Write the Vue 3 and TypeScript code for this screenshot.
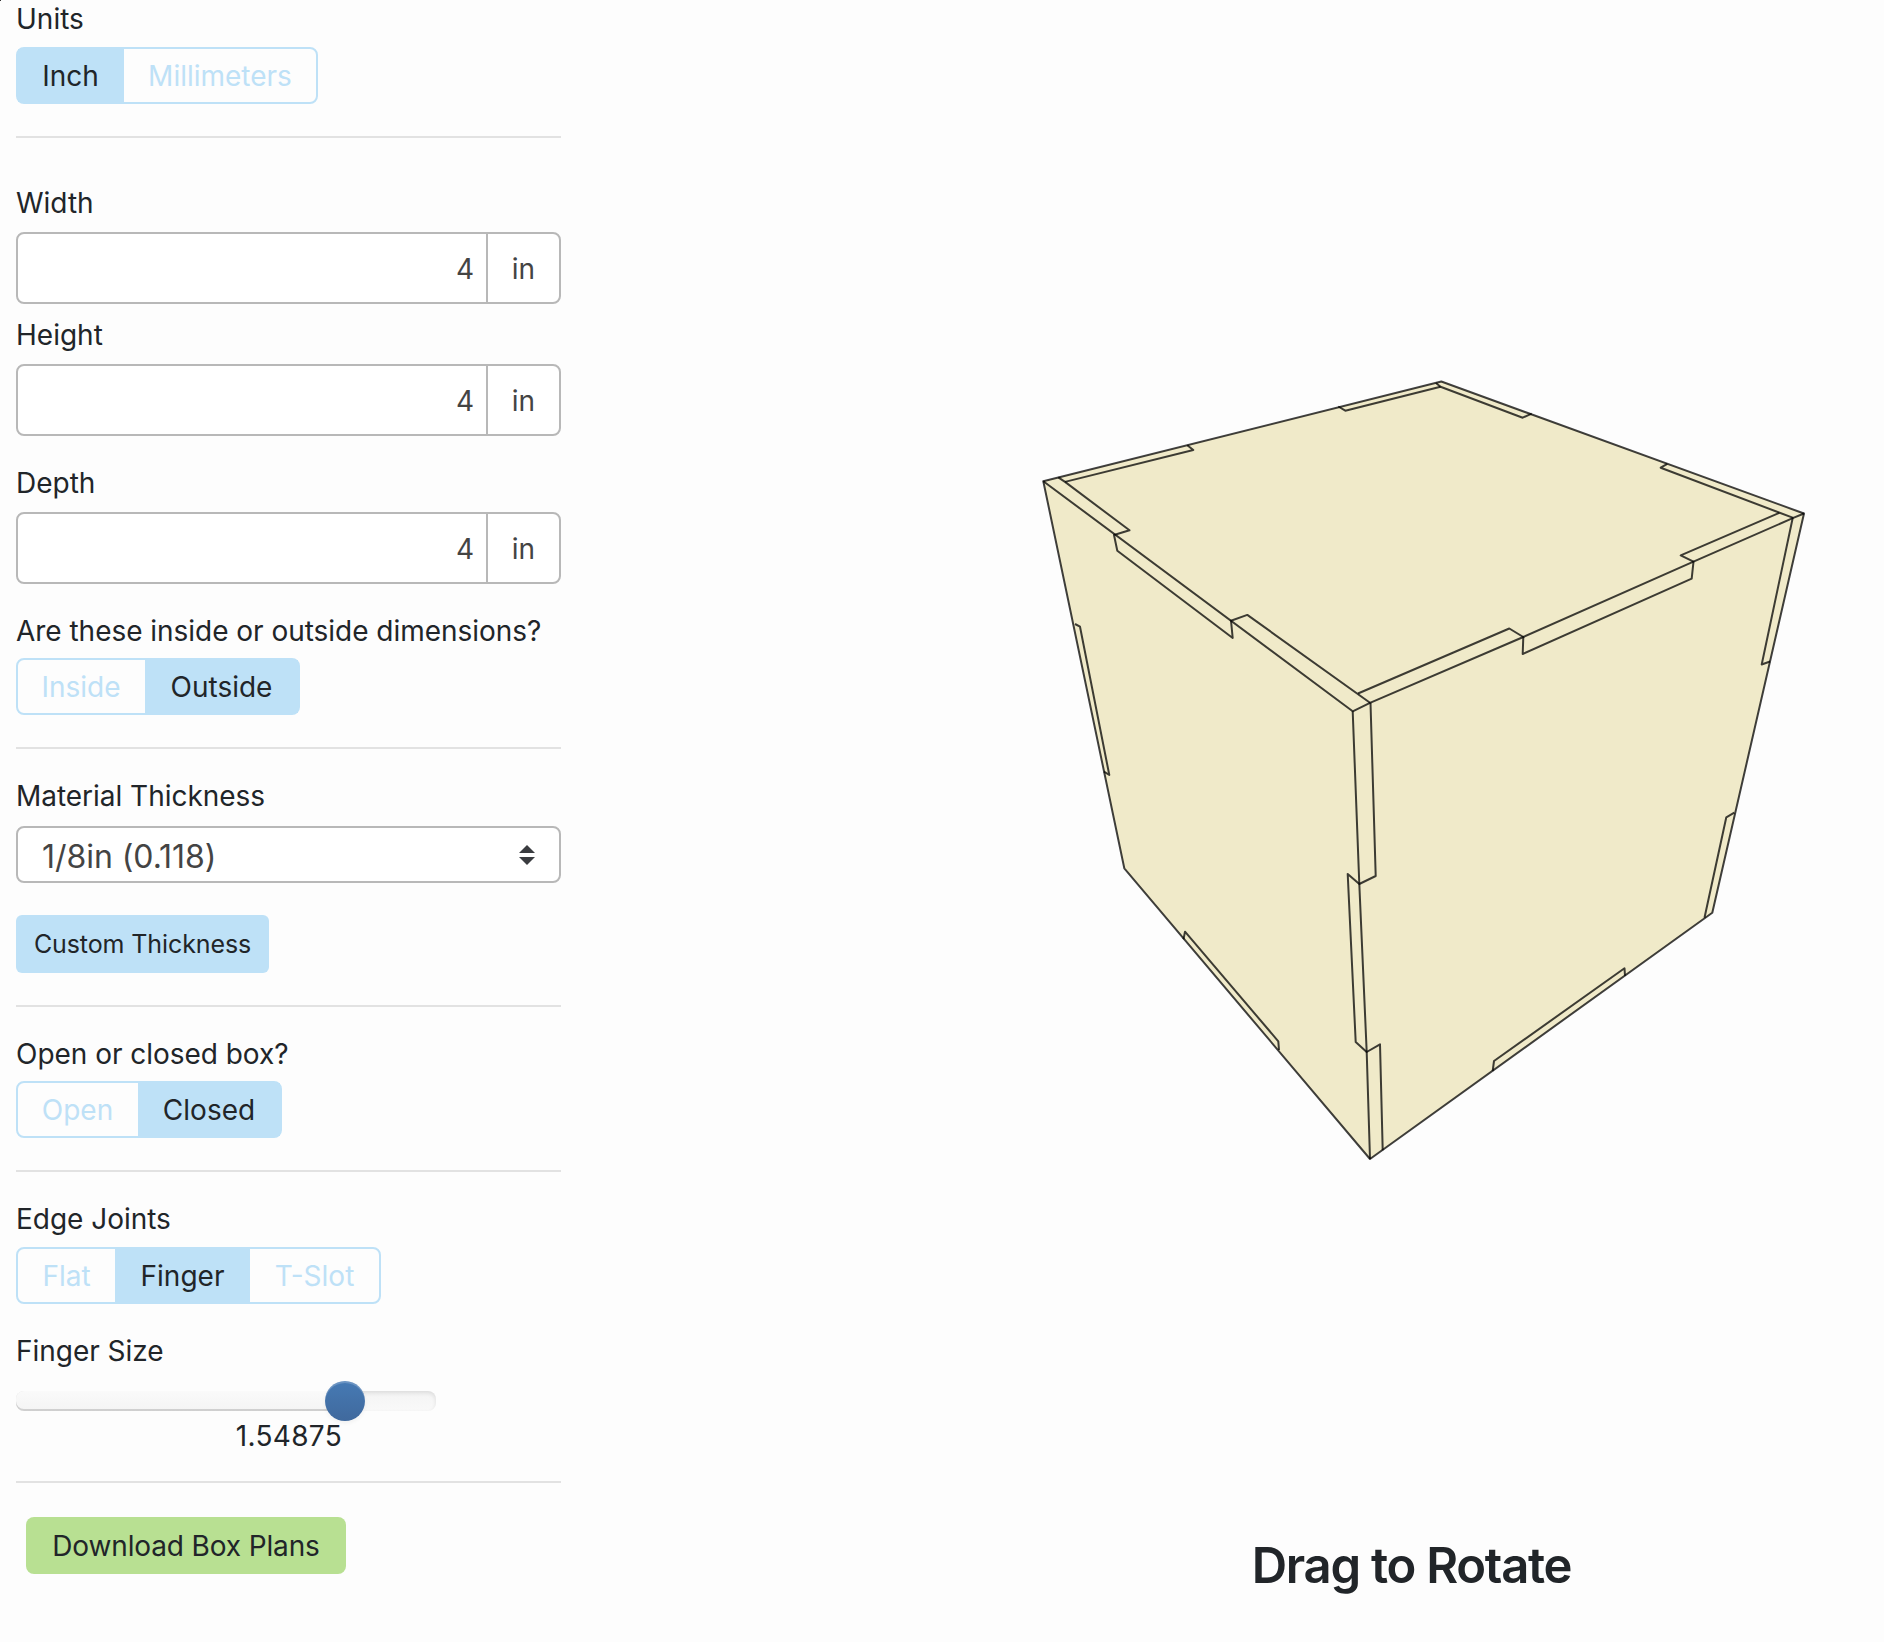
<script setup lang="ts">
import { ref } from 'vue'

interface Dimension {
  name: string
  value: number
}

const dimensions = ref<Dimension[]>([
  { name: 'Width', value: 4 },
  { name: 'Height', value: 4 },
  { name: 'Depth', value: 4 },
])

const units = ref('Inch')
const side = ref('Outside')
const lid = ref('Closed')
const joint = ref('Finger')
const fingerSize = ref(1.54875)
const handlePercent = 78.3

const outline = '1043.3,481.2 1441.3,381.5 1804,513.5 1712.3,912.7 1370,1159 1124.3,868.3'

// Visible panel seams, finger by finger
const seams: string[] = [
  // front top edges
  '1043.3,481.2 1352.7,711.3 1370,702.8 1523.3,637 1693.5,561.7 1793.3,517.9 1804,513.5',
  '1058.3,477.4 1065,481.9 1129.5,530.3 1114,535 1117.3,550.7 1232.7,638 1231,620.7 1247.3,614.9 1370,702.8',
  '1358,693.5 1509.3,628.5 1523.3,637 1522.7,654 1691.7,578.7 1693.5,561.7 1680.7,555.4 1779.3,512.8',
  // back top edges
  '1065,481.9 1193.3,450 1187.3,445.3',
  '1338.3,406.5 1345.3,410.7 1440.5,386.7',
  '1436,382.9 1440.5,386.7 1522.7,417.7 1531.7,413.6',
  '1793.3,517.9 1660.7,467.7 1667.3,463.8',
  // near corner
  '1352.7,711.3 1359.3,884 1366.7,1052 1370,1159',
  '1370.5,702.8 1375.7,876 1359.3,884 1347.7,874 1355.7,1042 1366.7,1052 1380,1044.3 1382.7,1150.2',
  // right corner
  '1792.7,518 1761.7,664.5 1770,661.5',
  '1734.3,812.7 1726.3,817.3 1704.5,917.8',
  // left corner and bottom edges
  '1075,624 1080,626.7 1109.3,775 1104,771.7',
  '1183.5,939.3 1185,931.7 1278.3,1041.3 1279,1050',
  '1492.7,1071 1494,1061 1624.5,968.3 1625,975.7',
]
</script>

<template>
  <main class="app">
    <form class="controls" @submit.prevent>
      <label class="label first">Units</label>
      <div class="group g10">
        <button v-for="(u, i) in ['Inch', 'Millimeters']" :key="u" type="button" class="seg" :class="[{ on: units === u }, ['w108', 'w194'][i]]" @click="units = u">{{ u }}</button>
      </div>
      <hr>

      <div v-for="d in dimensions" :key="d.name" class="dimension">
        <label class="label">{{ d.name }}</label>
        <div class="input-row">
          <span class="amount">{{ d.value }}</span>
          <span class="suffix">in</span>
        </div>
      </div>

      <label class="label l29 question">Are these inside or outside dimensions?</label>
      <div class="group">
        <button v-for="(s, i) in ['Inside', 'Outside']" :key="s" type="button" class="seg" :class="[{ on: side === s }, ['w129', 'w155'][i]]" @click="side = s">{{ s }}</button>
      </div>
      <hr>

      <label class="label l29">Material Thickness</label>
      <div class="select">
        <span class="choice">1/8in (0.118)</span>
        <svg class="arrows" width="16" height="20" viewBox="0 0 16 20"><path d="M0 8 8 0l8 8zM0 12h16l-8 8z" fill="#3a3c40" /></svg>
      </div>
      <button type="button" class="custom">Custom Thickness</button>
      <hr>

      <label class="label l29">Open or closed box?</label>
      <div class="group">
        <button v-for="(o, i) in ['Open', 'Closed']" :key="o" type="button" class="seg" :class="[{ on: lid === o }, ['w122', 'w144'][i]]" @click="lid = o">{{ o }}</button>
      </div>
      <hr>

      <label class="label l29">Edge Joints</label>
      <div class="group g10">
        <button v-for="(j, i) in ['Flat', 'Finger', 'T-Slot']" :key="j" type="button" class="seg" :class="[{ on: joint === j }, ['w99', 'w135', 'w131'][i]]" @click="joint = j">{{ j }}</button>
      </div>
      <label class="label l29">Finger Size</label>
      <div class="slider">
        <div class="fill" :style="{ width: handlePercent + '%' }"></div>
        <div class="handle" :style="{ left: handlePercent + '%' }"></div>
      </div>
      <output class="label size">{{ fingerSize }}</output>
      <hr class="last">

      <button type="button" class="download">Download Box Plans</button>
    </form>

    <section class="preview">
      <svg class="box" width="790" height="800" viewBox="1030 370 790 800">
        <polygon :points="outline" fill="#f0eac9" />
        <g fill="none" stroke="#000" stroke-opacity=".75" stroke-width="2" stroke-linejoin="round">
          <polygon :points="outline" />
          <polyline v-for="s in seams" :key="s" :points="s" />
        </g>
      </svg>
      <h3 class="hint">Drag to Rotate</h3>
    </section>
    <span class="speck"></span>
  </main>
</template>

<style>
body {
  background: #fdfdfd;
}
</style>

<style scoped>
.app {
  position: relative;
  display: flex;
  box-sizing: border-box;
  width: 1884px;
  height: 1642px;
  overflow: hidden;
  background: #fdfdfd;
  color: #212529;
  font: 400 28px/36px Inter, "Liberation Sans", sans-serif;
}
.speck {
  position: absolute;
  top: 0;
  left: 0;
  width: 1px;
  height: 1px;
  background: #333;
}
.controls {
  flex: none;
  display: flex;
  flex-direction: column;
  align-items: stretch;
  width: 545px;
  margin-left: 16px;
}
button {
  box-sizing: border-box;
  margin: 0;
  padding: 0;
  border: 0;
  color: #212529;
  font: inherit;
  letter-spacing: inherit;
  white-space: nowrap;
}
.label {
  display: block;
  height: 36px;
  white-space: nowrap;
}
.first {
  margin-top: 1px;
}
.l29 {
  margin-top: 29px;
  letter-spacing: -.03px;
}
hr {
  width: 100%;
  height: 2px;
  margin: 32px 0 0;
  border: 0;
  background: #e2e2e2;
}
hr.last {
  margin-top: 27px;
}
.group {
  display: flex;
  align-self: flex-start;
  box-sizing: border-box;
  height: 57px;
  margin-top: 9px;
  border: 2px solid #bee1f7;
  border-radius: 8px;
}
.g10 {
  margin-top: 10px;
}
.seg {
  height: 53px;
  background: transparent;
  color: #bee1f7;
}
.seg.on {
  background: #bee1f7;
  color: #212529;
}
.w108 { width: 106px; }
.w194 { width: 192px; }
.w129 { width: 127px; }
.w155 { width: 153px; }
.w122 { width: 120px; }
.w144 { width: 142px; }
.w99 { width: 97px; }
.w135 { width: 135px; }
.w131 { width: 129px; }
.w108,
.w129,
.w122 {
  padding-right: 1px;
}
.dimension {
  margin-top: 29px;
}
hr + .dimension {
  margin-top: 47px;
}
hr + .dimension + .dimension {
  margin-top: 13px;
}
.input-row {
  display: flex;
  box-sizing: border-box;
  height: 72px;
  margin-top: 11px;
  border: 2px solid #b8b8b8;
  border-radius: 8px;
  background: #fff;
  color: #444;
  line-height: 70px;
}
.amount {
  flex: 1;
  height: 68px;
  padding-right: 12px;
  text-align: right;
}
.suffix {
  width: 71px;
  height: 68px;
  border-left: 2px solid #b8b8b8;
  text-align: center;
}
.select {
  display: flex;
  align-items: center;
  justify-content: space-between;
  box-sizing: border-box;
  height: 57px;
  margin-top: 12px;
  padding: 0 24px;
  border: 2px solid #b8b8b8;
  border-radius: 8px;
  background: #fff;
  color: #444;
}
.choice {
  padding-top: 4px;
  font-size: 32px;
  letter-spacing: -.05px;
}
.custom {
  align-self: flex-start;
  width: 253px;
  height: 58px;
  margin-top: 32px;
  border-radius: 6px;
  background: #bee1f7;
  font-size: 25px;
  letter-spacing: -.1px;
}
.slider {
  position: relative;
  width: 420px;
  height: 20px;
  margin-top: 22px;
  border-radius: 8px;
  background: linear-gradient(#f4f4f4, #f9f9f9);
  box-shadow: inset 0 2px 4px rgba(0, 0, 0, .1);
}
.fill {
  height: 20px;
  border-radius: 8px 0 0 8px;
  background: linear-gradient(#fafafa, #f4f4f4);
  box-shadow: inset 0 -2px 0 rgba(0, 0, 0, .15);
}
.handle {
  position: absolute;
  top: -10px;
  width: 40px;
  height: 40px;
  border-radius: 50%;
  background: linear-gradient(#467ab4, #40699d);
  box-shadow: inset 0 2px 0 rgba(255, 255, 255, .2), 0 2px 4px rgba(0, 0, 0, .05);
  transform: translateX(-50%);
}
.size {
  width: 326px;
  margin-top: 7px;
  letter-spacing: .3px;
  text-align: right;
}
.download {
  align-self: flex-start;
  width: 320px;
  height: 57px;
  margin: 34px 0 0 10px;
  border-radius: 8px;
  background: #b8e092;
  letter-spacing: -.13px;
}
.preview {
  display: flex;
  flex: 1;
  flex-direction: column;
  align-items: flex-start;
  padding: 370px 0 0 469px;
}
.hint {
  width: 763px;
  margin: 364px 0 0;
  font-size: 49px;
  font-weight: 600;
  letter-spacing: -1.25px;
  line-height: 64px;
  text-align: center;
}
</style>
